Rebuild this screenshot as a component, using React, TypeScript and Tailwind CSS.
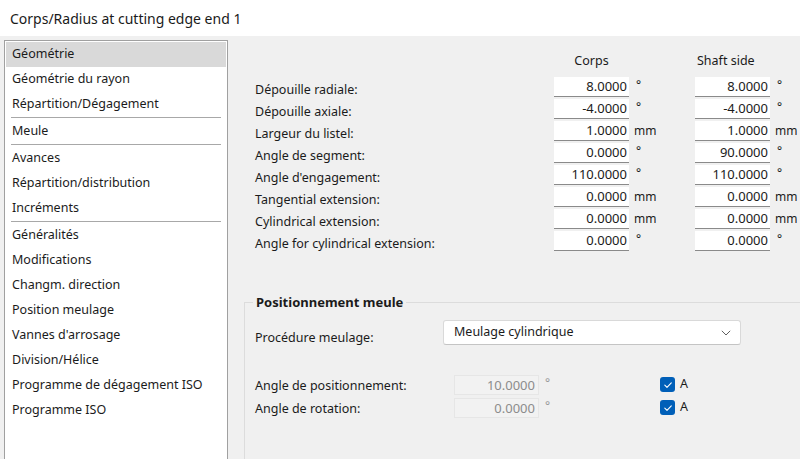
import React from 'react';

type Field = { label: string; a: string; b: string; unit: string };

const FIELDS: Field[] = [
  { label: 'Dépouille radiale:', a: '8.0000', b: '8.0000', unit: '°' },
  { label: 'Dépouille axiale:', a: '-4.0000', b: '-4.0000', unit: '°' },
  { label: 'Largeur du listel:', a: '1.0000', b: '1.0000', unit: 'mm' },
  { label: 'Angle de segment:', a: '0.0000', b: '90.0000', unit: '°' },
  { label: "Angle d'engagement:", a: '110.0000', b: '110.0000', unit: '°' },
  { label: 'Tangential extension:', a: '0.0000', b: '0.0000', unit: 'mm' },
  { label: 'Cylindrical extension:', a: '0.0000', b: '0.0000', unit: 'mm' },
  { label: 'Angle for cylindrical extension:', a: '0.0000', b: '0.0000', unit: '°' },
];

// null = separator line
const NAV: (string | null)[] = [
  'Géométrie',
  'Géométrie du rayon',
  'Répartition/Dégagement',
  null,
  'Meule',
  null,
  'Avances',
  'Répartition/distribution',
  'Incréments',
  null,
  'Généralités',
  'Modifications',
  'Changm. direction',
  'Position meulage',
  "Vannes d'arrosage",
  'Division/Hélice',
  'Programme de dégagement ISO',
  'Programme ISO',
];

const NumBox: React.FC<{ value: string }> = ({ value }) => (
  <div className="w-[75px] h-[20px] bg-white border-b border-[#8a8a8a] flex items-center justify-end pr-[2px] text-[13px] leading-none text-[#1b1b1b]">
    {value}
  </div>
);

const Unit: React.FC<{ unit: string }> = ({ unit }) => (
  <div className="h-[20px] flex items-center pl-[5px] text-[12px] leading-none text-[#1b1b1b]">
    {unit === '°' ? <span className="-mt-[3px] pl-[2px]">°</span> : unit}
  </div>
);

const Check: React.FC = () => (
  <div className="flex items-center gap-[5px]">
    <div className="w-[15px] h-[15px] rounded-[3px] bg-[#005fb8] flex items-center justify-center">
      <svg width="10" height="10" viewBox="0 0 10 10" fill="none">
        <path d="M1.8 5.2 L4 7.3 L8.3 2.8" stroke="white" strokeWidth="1.1" strokeLinecap="round" strokeLinejoin="round" />
      </svg>
    </div>
    <span className="text-[12.5px] text-[#1b1b1b]">A</span>
  </div>
);

const App: React.FC = () => {
  return (
    <div
      className="w-[800px] h-[459px] overflow-hidden bg-[#f0f0f0] text-[#1b1b1b] flex flex-col"
      style={{ fontFamily: '"Noto Sans", "Open Sans", sans-serif' }}
    >
      {/* title bar */}
      <div className="h-[36px] shrink-0 bg-white flex items-center pl-[10px] text-[14px] text-[#1a1a1a]">
        Corps/Radius at cutting edge end 1
      </div>

      <div className="flex flex-1 min-h-0 pt-[4px]">
        {/* navigation list */}
        <div className="ml-[4px] w-[224px] h-[440px] shrink-0 bg-white border border-[#a0a0a0] p-[1px]">
          {NAV.map((item, i) =>
            item === null ? (
              <div key={i} className="mx-[5px] h-[1px] mb-[1px] bg-[#a8a8a8]" />
            ) : (
              <div
                key={i}
                className={`h-[25px] flex items-center pl-[6px] text-[12.5px] ${i === 0 ? 'bg-[#d9d9d9]' : ''}`}
              >
                {item}
              </div>
            )
          )}
        </div>

        {/* content */}
        <div className="flex-1 min-w-0 flex flex-col pl-[16px]">
          {/* header */}
          <div className="flex h-[45px] items-center pt-[6px]">
            <div className="w-[310px]" />
            <div className="w-[75px] text-center text-[12.5px]">Corps</div>
            <div className="w-[66px]" />
            <div className="text-[12.5px] pl-[2px]">Shaft side</div>
          </div>

          <div className="flex flex-col gap-[2px] pl-[11px]">
            {FIELDS.map((f) => (
              <div key={f.label} className="flex items-start h-[20px]">
                <div className="w-[299px] pt-[5px] text-[12.5px] leading-[16px] whitespace-nowrap">{f.label}</div>
                <NumBox value={f.a} />
                <div className="w-[66px]">
                  <Unit unit={f.unit} />
                </div>
                <NumBox value={f.b} />
                <Unit unit={f.unit} />
              </div>
            ))}
          </div>

          {/* group box */}
          <div className="relative mt-[51px] h-[200px] border-l border-t border-[#dcdcdc]">
            <div className="absolute -top-[10px] left-[8px] px-[3px] bg-[#f0f0f0] text-[13px] font-bold leading-[18px]">
              Positionnement meule
            </div>

            <div className="flex items-center pt-[15px] pl-[10px]">
              <div className="w-[188px] pt-[11px] text-[12.5px]">Procédure meulage:</div>
              <div className="w-[298px] h-[25px] bg-white border border-[#d9d9d9] border-b-[#c4c4c4] rounded-[3px] flex items-center justify-between pl-[10px] pr-[9px] text-[12.5px]">
                <span>Meulage cylindrique</span>
                <svg width="10" height="6" viewBox="0 0 10 6" fill="none">
                  <path d="M0.8 0.8 L5 5 L9.2 0.8" stroke="#606060" strokeWidth="1" />
                </svg>
              </div>
            </div>

            <div className="flex flex-col gap-[3px] pt-[28px] pl-[10px]">
              {[
                { label: 'Angle de positionnement:', v: '10.0000' },
                { label: 'Angle de rotation:', v: '0.0000' },
              ].map((r) => (
                <div key={r.label} className="flex items-start h-[20px]">
                  <div className="w-[199px] pt-[3px] text-[12.5px] leading-[16px]">{r.label}</div>
                  <div className="w-[85px] h-[20px] border border-[#e6e6e6] bg-[#f2f2f2] flex items-center justify-end pr-[3px] text-[13px] leading-none text-[#8c8c8c]">
                    {r.v}
                  </div>
                  <div className="w-[121px] h-[20px] flex items-start pl-[6px] text-[12px] text-[#9a9a9a] leading-none pt-[2px]">
                    °
                  </div>
                  <Check />
                </div>
              ))}
            </div>
          </div>
        </div>
      </div>
    </div>
  );
};

export default App;
